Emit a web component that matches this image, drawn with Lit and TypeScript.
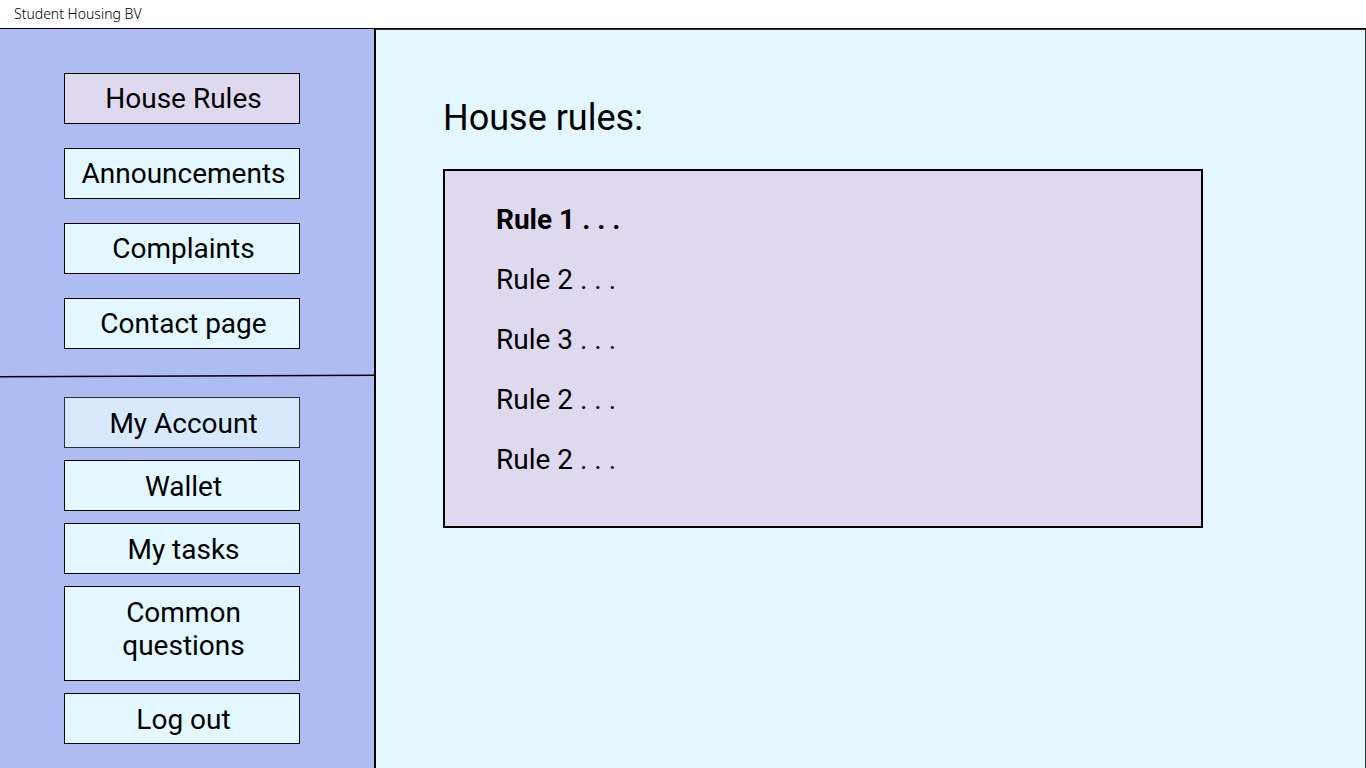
import { LitElement, html, css } from "lit";
import { customElement, state } from "lit/decorators.js";
import { classMap } from "lit/directives/class-map.js";

const PAGES = ["House Rules", "Announcements", "Complaints", "Contact page"];
const ACCOUNT = ["My Account", "Wallet", "My tasks", "Common questions", "Log out"];
const RULES = ["Rule 1 . . .", "Rule 2 . . .", "Rule 3 . . .", "Rule 2 . . .", "Rule 2 . . ."];

@customElement("app-root")
export class AppRoot extends LitElement {
  static styles = css`
    :host {
      display: flex;
      flex-direction: column;
      min-height: 100vh;
      box-sizing: border-box;
      font-family: Roboto, sans-serif;
      color: #000;
      background: #e2f7fe;
    }
    .title {
      height: 28px;
      padding: 0 14px;
      background: #fff;
      border-bottom: 1px solid #000;
      font: 300 14px/28px "Noto Sans", sans-serif;
    }
    .body {
      flex: 1;
      display: grid;
      grid-template-columns: 376px 1fr;
    }
    .side {
      background: #adbcf1;
      border-right: 2px solid #000;
    }
    .group {
      display: flex;
      flex-direction: column;
      padding: 0 74px 0 64px;
    }
    .pages {
      gap: 24px;
      padding-top: 44px;
      padding-bottom: 25px;
    }
    .divider {
      display: block;
      width: 100%;
      height: 4px;
    }
    .account {
      gap: 12px;
      padding-top: 19px;
      padding-bottom: 24px;
    }
    button {
      min-height: 51px;
      padding: 8px 0 8px 3px;
      border: 1px solid #000;
      border-radius: 0;
      background: #e2f7fe;
      color: inherit;
      font: 28px/33px Roboto, sans-serif;
      cursor: pointer;
    }
    .account button {
      padding-top: 9px;
      padding-bottom: 7px;
    }
    .account button.tall {
      padding-bottom: 18px;
    }
    button.active {
      background: #ded9ee;
    }
    button.soft {
      background: #d7e9fc;
      border-color: #2b2e33;
    }
    main {
      padding: 67px 162px 67px 67px;
      border-top: 1px solid #333;
      border-right: 1px solid #333;
    }
    h1 {
      margin: 0 0 30px;
      font: 400 36px/42px Roboto, sans-serif;
    }
    .rules {
      margin: 0;
      padding: 34px 51px 51px;
      list-style: none;
      background: #ded9ee;
      border: 2px solid #000;
      font-size: 28px;
      line-height: 30px;
    }
    .rules li + li {
      margin-top: 30px;
    }
    .lead {
      font-weight: 700;
    }
  `;

  @state() private current = "House Rules";

  private item(label: string) {
    return html`<button
      type="button"
      class=${classMap({
        active: label === this.current,
        soft: label === "My Account",
        tall: label === "Common questions",
      })}
      @click=${() => (this.current = label)}
    >${label}</button>`;
  }

  render() {
    return html`
      <header class="title">Student Housing BV</header>
      <div class="body">
        <nav class="side">
          <div class="group pages">${PAGES.map((p) => this.item(p))}</div>
          <svg class="divider" viewBox="0 0 374 4" preserveAspectRatio="none" aria-hidden="true">
            <line x1="0" y1="2.8" x2="374" y2="1.2" stroke="#000" stroke-width="1.6" />
          </svg>
          <div class="group account">${ACCOUNT.map((p) => this.item(p))}</div>
        </nav>
        <main>
          <h1>House rules:</h1>
          <ul class="rules">
            ${RULES.map((r, i) => html`<li class=${classMap({ lead: i === 0 })}>${r}</li>`)}
          </ul>
        </main>
      </div>
    `;
  }
}
